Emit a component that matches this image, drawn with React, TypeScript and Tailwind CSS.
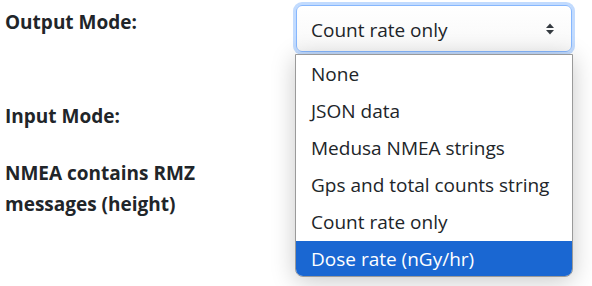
import React from "react";

const items = [
  "None",
  "JSON data",
  "Medusa NMEA strings",
  "Gps and total counts string",
  "Count rate only",
  "Dose rate (nGy/hr)",
];

export default function App() {
  return (
    <div
      className="relative w-[592px] h-[286px] bg-white overflow-hidden text-[#212529]"
      style={{ fontFamily: '"Open Sans", "Noto Sans", sans-serif' }}
    >
      <div className="flex flex-col pl-[5px]">
        <div className="flex h-[96px]">
          <div className="w-[291px] pt-[7px] text-[19px] font-bold leading-[31px]">Output Mode:</div>
          <div className="pt-[5px]">
            <div className="w-[276px] h-[47px] rounded-[6px] border border-[#86b7fe] shadow-[0_0_0_3px_#c2dbfe] flex items-center justify-between pl-[14px] pr-[16px] text-[19px] bg-gradient-to-b from-white to-[#f8f8f8]">
              <span className="pt-[3px]">Count rate only</span>
              <svg width="10" height="14" viewBox="0 0 10 14">
                <path d="M1 6 L5 1.5 L9 6 Z" fill="#343a40" />
                <path d="M1 8 L5 12.5 L9 8 Z" fill="#343a40" />
              </svg>
            </div>
          </div>
        </div>
        <div className="flex h-[55px]">
          <div className="w-[291px] pt-[5px] text-[19px] font-bold leading-[31px]">Input Mode:</div>
        </div>
        <div className="flex">
          <div className="w-[291px] pt-[7px] text-[19px] font-bold leading-[31px]">
            NMEA contains RMZ
            <br />
            messages (height)
          </div>
          <div className="pt-[19px]">
            <div className="w-[30px] h-[16px] rounded-full bg-[#0d6efd]" />
          </div>
        </div>
      </div>

      <div className="absolute left-[295px] top-[54px] w-[278px] h-[223px] bg-white border border-[#9a9a9a] rounded-b-[8px] overflow-hidden shadow-[0_4px_24px_rgba(0,0,0,0.22)]">
        <div className="h-[1px]" />
        {items.map((it, i) => (
          <div
            key={it}
            className={
              "h-[37px] flex items-center pl-[15px] text-[19px] " +
              (i === 5 ? "bg-[#1a67d2] text-white" : "text-[#212529]")
            }
          >
            {it}
          </div>
        ))}
      </div>
    </div>
  );
}
